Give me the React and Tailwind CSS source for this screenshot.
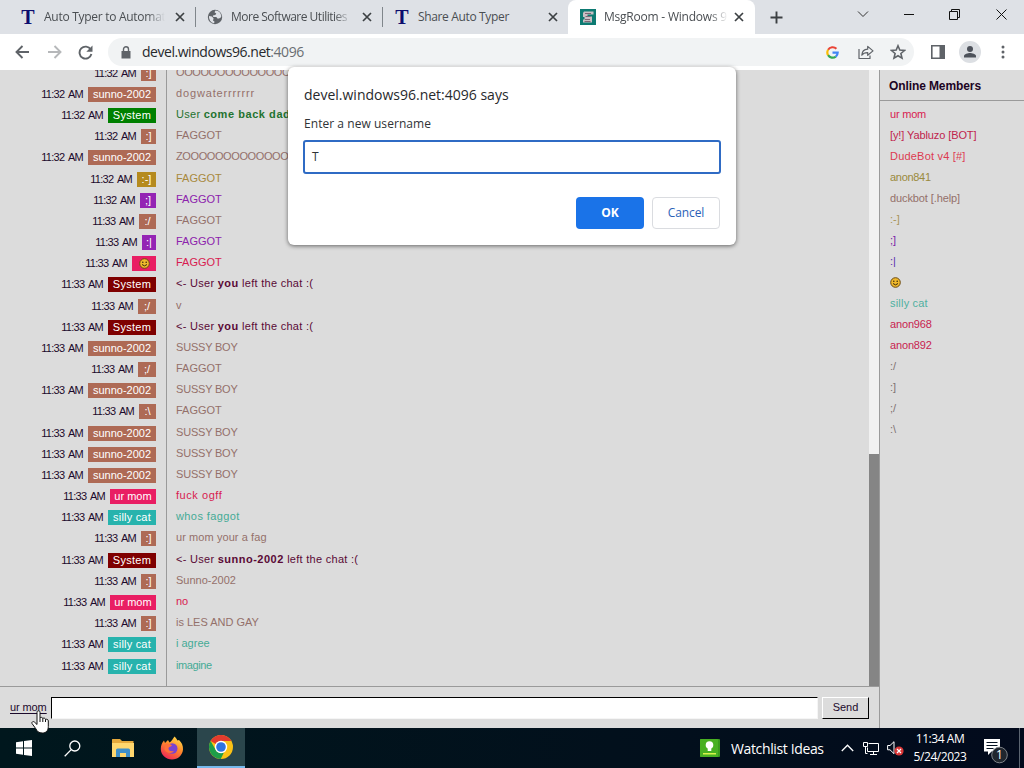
import React from 'react';
import clsx from 'clsx';

const BROWN = { badge: 'bg-[#ae6a55]', text: 'text-[#94706a]' };
const PINK = { badge: 'bg-[#e91e63]', text: 'text-[#d81b50]' };
const TEAL = { badge: 'bg-[#27b3ad]', text: 'text-[#45ab96]' };
const OLIVE = { badge: 'bg-[#b58a1e]', text: 'text-[#a8893c]' };
const PURPLE = { badge: 'bg-[#9424b4]', text: 'text-[#8c22ac]' };
const JOIN = { badge: 'bg-[#008000]', text: 'text-[#1f7330]' };
const LEAVE = { badge: 'bg-[#7f0000]', text: 'text-[#5a0a36]' };

const left = (name) => (
    <span className="tracking-[0.28px]">
        {'<- User '}
        <b className="tracking-[0.5px]">{name}</b>
        {' left the chat :('}
    </span>
);

const messages = [
    { time: '11:32 AM', user: ':]', c: BROWN, body: <span className="tracking-[-0.4px]">OOOOOOOOOOOOOO</span> },
    { time: '11:32 AM', user: 'sunno-2002', c: BROWN, body: <span className="tracking-[0.85px]">dogwaterrrrrrr</span> },
    { time: '11:32 AM', user: 'System', c: JOIN, body: <span className="tracking-[0.28px]">User <b className="tracking-[0.55px]">come back dad</b></span> },
    { time: '11:32 AM', user: ':]', c: BROWN, body: 'FAGGOT' },
    { time: '11:32 AM', user: 'sunno-2002', c: BROWN, body: <span className="tracking-[-0.4px]">ZOOOOOOOOOOOOO</span> },
    { time: '11:32 AM', user: ':-]', c: OLIVE, body: 'FAGGOT' },
    { time: '11:32 AM', user: ';]', c: PURPLE, body: 'FAGGOT' },
    { time: '11:33 AM', user: ':/', c: BROWN, body: 'FAGGOT' },
    { time: '11:33 AM', user: ':|', c: PURPLE, body: 'FAGGOT' },
    { time: '11:33 AM', user: 'smile', c: PINK, body: 'FAGGOT' },
    { time: '11:33 AM', user: 'System', c: LEAVE, body: left('you') },
    { time: '11:33 AM', user: ';/', c: BROWN, body: 'v' },
    { time: '11:33 AM', user: 'System', c: LEAVE, body: left('you') },
    { time: '11:33 AM', user: 'sunno-2002', c: BROWN, body: <span className="tracking-[-0.2px]">SUSSY BOY</span> },
    { time: '11:33 AM', user: ';/', c: BROWN, body: 'FAGGOT' },
    { time: '11:33 AM', user: 'sunno-2002', c: BROWN, body: <span className="tracking-[-0.2px]">SUSSY BOY</span> },
    { time: '11:33 AM', user: ':\\', c: BROWN, body: 'FAGGOT' },
    { time: '11:33 AM', user: 'sunno-2002', c: BROWN, body: <span className="tracking-[-0.2px]">SUSSY BOY</span> },
    { time: '11:33 AM', user: 'sunno-2002', c: BROWN, body: <span className="tracking-[-0.2px]">SUSSY BOY</span> },
    { time: '11:33 AM', user: 'sunno-2002', c: BROWN, body: <span className="tracking-[-0.2px]">SUSSY BOY</span> },
    { time: '11:33 AM', user: 'ur mom', c: PINK, body: <span className="tracking-[0.55px]">fuck ogff</span> },
    { time: '11:33 AM', user: 'silly cat', c: TEAL, body: <span className="tracking-[0.4px]">whos faggot</span> },
    { time: '11:33 AM', user: ':]', c: BROWN, body: <span className="tracking-[0.08px]">ur mom your a fag</span> },
    { time: '11:33 AM', user: 'System', c: LEAVE, body: left('sunno-2002') },
    { time: '11:33 AM', user: ':]', c: BROWN, body: 'Sunno-2002' },
    { time: '11:33 AM', user: 'ur mom', c: PINK, body: 'no' },
    { time: '11:33 AM', user: ':]', c: BROWN, body: 'is LES AND GAY' },
    { time: '11:33 AM', user: 'silly cat', c: TEAL, body: 'i agree' },
    { time: '11:33 AM', user: 'silly cat', c: TEAL, body: <span className="tracking-[-0.4px]">imagine</span> },
];

// badge widths per user name
const badgeWidth = {
    'sunno-2002': 'w-[68px]',
    System: 'w-12 tracking-[0.3px]',
    'ur mom': 'w-[46px]',
    'silly cat': 'w-12 tracking-[0.2px]',
    smile: 'w-6',
    ':]': 'w-[15px]',
    ';]': 'w-4',
    ':|': 'w-3.5',
    ':/': 'w-[17px]',
    ';/': 'w-[18px]',
    ':\\': 'w-[17px]',
    ':-]': 'w-[19px]',
};

const members = [
    ['ur mom', 'text-[#d81b50] tracking-[-0.2px]'],
    ['[y!] Yabluzo [BOT]', 'text-[#c0244c] tracking-[-0.1px]'],
    ['DudeBot v4 [#]', 'text-[#dc3a50] tracking-[0.2px]'],
    ['anon841', 'text-[#9a8a3c] tracking-[-0.3px]'],
    ['duckbot [.help]', 'text-[#94706a] tracking-[-0.1px]'],
    [':-]', 'text-[#a89458]'],
    [';]', 'text-[#7a20a8]'],
    [':|', 'text-[#5a30b0]'],
    ['smile', ''],
    ['silly cat', 'text-[#4fb0a0] tracking-[0.2px]'],
    ['anon968', 'text-[#c81e50] tracking-[-0.15px]'],
    ['anon892', 'text-[#c81e50] tracking-[-0.15px]'],
    [':/', 'text-[#7e7272]'],
    [':]', 'text-[#7e7272]'],
    [';/', 'text-[#7e7272]'],
    [':\\', 'text-[#7e7272]'],
];

const Smile = () => (
    <svg width="11" height="11" viewBox="0 0 11 11">
        <circle cx="5.5" cy="5.5" r="4.8" fill="#f0b92c" stroke="#6b4a12" strokeWidth="1" />
        <circle cx="3.8" cy="4.3" r=".8" fill="#3c2c10" />
        <circle cx="7.2" cy="4.3" r=".8" fill="#3c2c10" />
        <path d="M3 6.5q2.5 2.8 5 0" stroke="#3c2c10" fill="none" />
    </svg>
);

const Close = () => (
    <svg width="10" height="10" viewBox="0 0 10 10" className="shrink-0" stroke="#3c4043" strokeWidth="1.7">
        <path d="M1 1l8 8M9 1l-8 8" />
    </svg>
);

const TIcon = () => (
    <span className="w-4 text-center font-['Liberation_Serif',serif] font-bold text-[20px] leading-4 text-[#0c0c6e]">T</span>
);

const GlobeIcon = () => (
    <svg width="16" height="16" viewBox="0 0 16 16">
        <circle cx="8" cy="8" r="7.2" fill="#5f6368" />
        <path d="M2 7l3 .6 1.6 2L6 11.500l1.600 1.300-.6 1.500A6.500 6.500 0 0 1 2 7zM8.500 1.600l-1 1.700 1.800 1.200-1 1.500-2.500.5.5 1.500h3l1.500 1.700 2.500-.6 1-1.600A6.500 6.500 0 0 0 8.500 1.600z" fill="#dee1e6" />
    </svg>
);

const MsgIcon = () => (
    <svg width="16" height="16" viewBox="0 0 16 16">
        <path d="M0 0h16v16H0z" fill="#0d7a72" />
        <path d="M4 2.500h9.500v3H7.500v2H12v6H3v-3h1.500V8H3V4z" fill="#c9bfc4" />
        <path d="M5 4.500h6M5.500 7.500h5M5 10.500h5M4.500 12.500h6" stroke="#7d6674" />
    </svg>
);

const Tab = ({ icon, title, className, titleClass }) => (
    <div className={clsx('flex items-center h-[34px]', className)}>
        <span className="w-4 flex shrink-0">{icon}</span>
        <span className={clsx('ml-2 overflow-hidden whitespace-nowrap text-xs text-[#4a4e52] flex-1 leading-4', titleClass)}>
            {title}
        </span>
        <Close />
    </div>
);

const FADE = '[mask-image:linear-gradient(to_right,black_85%,transparent)]';

const TabStrip = () => (
    <div className="h-[34px] bg-[#dee1e6] flex items-center shrink-0">
        <Tab icon={<TIcon />} title="Auto Typer to Automat" className="w-[165px] ml-5 shrink-0" titleClass={clsx(FADE, 'mr-2.5 tracking-[-0.28px]')} />
        <div className="w-px h-5 bg-[#80868b] ml-2.5" />
        <Tab icon={<GlobeIcon />} title="More Software Utilities" className="w-[165px] ml-[11px] shrink-0" titleClass={clsx(FADE, 'mr-2.5 tracking-[-0.5px]')} />
        <div className="w-px h-5 bg-[#80868b] ml-2.5" />
        <Tab icon={<TIcon />} title="Share Auto Typer" className="w-[164px] ml-[11px] shrink-0" titleClass="mr-2.5 tracking-[-0.35px]" />
        <div className="relative bg-white rounded-t-lg w-[187px] ml-2.5 h-[34px] pl-3 pr-[11px] shrink-0">
            <Tab icon={<MsgIcon />} title="MsgRoom - Windows 9" titleClass={clsx(FADE, 'mr-1.5 tracking-[-0.22px]')} />
        </div>
        <svg width="13" height="13" viewBox="0 0 13 13" className="ml-[15px] shrink-0" stroke="#3c4043" strokeWidth="1.9">
            <path d="M6.500 .5v12M.5 6.500h12" />
        </svg>
        <svg width="12" height="12" viewBox="0 0 12 12" className="ml-[74px] mb-1.5 shrink-0" stroke="#333" fill="none">
            <path d="M1 3.500l5 5 5-5" />
        </svg>
        <svg width="11" height="11" viewBox="0 0 11 11" className="ml-[35px] mb-1.5 shrink-0" stroke="#111">
            <path d="M0 5.500h10" />
        </svg>
        <svg width="11" height="11" viewBox="0 0 11 11" className="ml-[34px] mb-1.5 shrink-0" stroke="#111" fill="none">
            <path d="M.5 2.500h8v8h-8zM2.500 2.500v-2h8v8h-2" />
        </svg>
        <svg width="11" height="11" viewBox="0 0 11 11" className="ml-[36px] mb-1.5 shrink-0" stroke="#111">
            <path d="M.5 .5l10 10M10.500 .5l-10 10" />
        </svg>
    </div>
);

const Toolbar = () => (
    <div className="h-9 bg-white flex items-center shrink-0 pl-[15px]">
        <svg width="15" height="14" viewBox="0 0 15 14" stroke="#5f6368" strokeWidth="1.9" fill="none">
            <path d="M14 7H1.500M7.500 1l-6 6 6 6" />
        </svg>
        <svg width="15" height="14" viewBox="0 0 15 14" className="ml-[17px]" stroke="#b6b8ba" strokeWidth="1.9" fill="none">
            <path d="M1 7h12.500M7.500 1l6 6-6 6" />
        </svg>
        <svg width="15" height="15" viewBox="0 0 15 15" className="ml-4" fill="none">
            <path d="M12.700 4.500A6 6 0 1 0 13.400 9" stroke="#5f6368" strokeWidth="1.900" />
            <path d="M14.500 .5v6.200H8.300z" fill="#5f6368" />
        </svg>
        <div className="ml-[15px] w-[806px] h-7 rounded-full bg-[#f1f3f4] flex items-center pl-[13px]">
            <svg width="10" height="13" viewBox="0 0 10 13">
                <path d="M.5 5h9v7.500h-9z" fill="#5f6368" />
                <path d="M2.500 5V3.300a2.500 2.500 0 0 1 5 0V5" stroke="#5f6368" strokeWidth="1.400" fill="none" />
            </svg>
            <span className="ml-[11px] text-[14px] leading-5 tracking-[-0.46px] text-[#27292c] flex-1">
                devel.windows96.net<span className="text-[#6a6e72]">:4096</span>
            </span>
            <svg width="13" height="13" viewBox="0 0 13 13" fill="none" strokeWidth="2.200">
                <path d="M10.400 2.800A5.300 5.300 0 0 0 2.100 3.800" stroke="#ea4335" />
                <path d="M2.100 3.800a5.300 5.300 0 0 0 0 5.400" stroke="#fbbc05" />
                <path d="M2.100 9.200a5.300 5.300 0 0 0 7.700 1.400" stroke="#34a853" />
                <path d="M9.800 10.600a5.300 5.300 0 0 0 1.900-4H6.500" stroke="#4285f4" />
            </svg>
            <svg width="16" height="15" viewBox="0 0 16 15" className="ml-[19px]" stroke="#5f6368" strokeWidth="1.200" fill="none" strokeLinejoin="round">
                <path d="M1 4v9.500h11V10.500" />
                <path d="M3.800 10.200C4 6.500 6.200 4.400 9.700 4.200V1.400l5.300 4.500-5.300 4.400V7.600C7 7.500 5 8.500 3.800 10.200z" />
            </svg>
            <svg width="16" height="16" viewBox="0 0 16 16" className="ml-4 mr-2" stroke="#5f6368" strokeWidth="1.600" fill="none">
                <path d="M8 1.800l1.800 4.300 4.700.4-3.600 3 1.100 4.600L8 11.700l-4 2.400 1.100-4.600-3.600-3 4.700-.4z" />
            </svg>
        </div>
        <svg width="14" height="14" viewBox="0 0 14 14" className="ml-[17px]">
            <path d="M.8 .8h12.400v12.400H.8z" stroke="#5f6368" strokeWidth="1.600" fill="none" />
            <path d="M8.500 .5h5v13h-5z" fill="#5f6368" />
        </svg>
        <svg width="22" height="22" viewBox="0 0 22 22" className="ml-3.5">
            <circle cx="11" cy="11" r="11" fill="#dcdfe3" />
            <circle cx="11" cy="8" r="3" fill="#4d525b" />
            <path d="M5 16.500v-1.500c0-2 4-3 6-3s6 1 6 3v1.500z" fill="#4d525b" />
        </svg>
        <svg width="4" height="14" viewBox="0 0 4 14" className="ml-[20px]" fill="#5f6368">
            <circle cx="2" cy="2" r="1.500" />
            <circle cx="2" cy="7" r="1.500" />
            <circle cx="2" cy="12" r="1.500" />
        </svg>
    </div>
);

const Message = ({ time, user, c, body }) => (
    <div className="flex h-[21.18px] shrink-0 items-center whitespace-nowrap leading-[15px]">
        <div className="w-[156px] flex justify-end items-center">
            <span className="text-[#1c0a2c] tracking-[-0.7px] [word-spacing:1.8px] mr-[5px]">{time}</span>
            <span className={clsx('h-[15px] text-white flex items-center justify-center', c.badge, badgeWidth[user])}>
                {user === 'smile' ? <Smile /> : user}
            </span>
        </div>
        <span className={clsx('ml-5 mb-0.5', c.text)}>{body}</span>
    </div>
);

const ChatRoom = () => (
    <div className="h-[658px] flex bg-[#dcdcdc] font-['Liberation_Sans',Arial,sans-serif] text-[11px]">
        <div className="w-[879px] flex flex-col">
            <div className="h-[616px] flex">
                <div className="w-[869px] h-full flex flex-col justify-end overflow-hidden pb-[9.4px] bg-[linear-gradient(to_right,transparent_166px,#9a9a9a_166px,#9a9a9a_167px,transparent_167px)]">
                    {messages.map((m, i) => (
                        <Message key={i} {...m} />
                    ))}
                </div>
                <div className="w-2.5 bg-[#f1f1f1] flex flex-col justify-end">
                    <div className="h-[232px] bg-[#858585]" />
                </div>
            </div>
            <div className="h-[42px] border-t border-[#9a9a9a] flex items-center pl-2.5">
                <span className="w-[41px] text-[#1c0a2c] underline underline-offset-2 whitespace-nowrap tracking-[-0.1px]">ur mom</span>
                <div className="w-[767px] h-[22px] bg-white border-t border-l border-black border-r border-b border-r-[#f5f5f5] border-b-[#f5f5f5]" />
                <button className="ml-1 w-[47px] h-[22px] bg-[#dcdcdc] border border-t-white border-l-white border-r-black border-b-black text-[#1c0a2c]">
                    Send
                </button>
            </div>
        </div>
        <div className="w-[145px] border-l border-[#9a9a9a]">
            <div className="h-[31px] border-b border-[#9a9a9a] pl-[9px] pt-0.5 flex items-center font-bold text-xs tracking-[-0.1px] text-[#1c0424]">
                Online Members
            </div>
            <div className="pt-[3px] pl-2.5">
                {members.map(([name, color]) => (
                    <div key={name} className={clsx('h-[21px] flex items-center', color)}>
                        {name === 'smile' ? <Smile /> : name}
                    </div>
                ))}
            </div>
        </div>
    </div>
);

const PromptDialog = () => (
    <div className="absolute left-[288px] top-[67px] w-[448px] h-[178px] bg-white rounded-md shadow-[0_1px_4px_rgba(0,0,0,0.55)] px-4 flex flex-col">
        <div className="mt-[18px] text-[14px] leading-5 text-[#27292c]">devel.windows96.net:4096 says</div>
        <div className="mt-[11px] text-xs leading-4 tracking-[0.05px] text-[#303336]">Enter a new username</div>
        <div className="mt-2 -ml-px w-[418px] h-[34px] border-2 border-[#2f6bc4] rounded-[3px] flex items-center pl-[7px] text-xs text-[#303336]">T</div>
        <div className="mt-[23px] flex justify-end gap-2 text-xs">
            <button className="w-[68px] h-8 rounded bg-[#1a73e8] text-white font-bold">OK</button>
            <button className="w-[68px] h-8 rounded border border-[#dadce0] text-[#2b62b8] font-medium tracking-[-0.1px]">Cancel</button>
        </div>
    </div>
);

const Taskbar = () => (
    <div className="h-10 flex items-center bg-[linear-gradient(to_right,#00171d,#02101c_60%,#020a1c)] text-white">
        <svg width="16" height="16" viewBox="0 0 16 16" className="ml-4 shrink-0" fill="#fff">
            <path d="M0 2.200L7 1.200V7.500H0zM8 1.100L16 0V7.500H8zM0 8.500H7V14.800L0 13.800zM8 8.500H16V16L8 14.900z" />
        </svg>
        <svg width="17" height="17" viewBox="0 0 17 17" className="ml-8 shrink-0" fill="none" stroke="#fff" strokeWidth="1.300">
            <circle cx="10.800" cy="6" r="5" />
            <path d="M7.200 9.600L.7 16.200" />
        </svg>
        <svg width="22" height="20" viewBox="0 0 22 20" className="ml-[31px] shrink-0">
            <path d="M0 1.500Q0 1 .5 1H8l2 2H21.500v16H0z" fill="#e5a93c" />
            <path d="M0 5h22v14H0z" fill="#ffd76e" />
            <path d="M4 19v-7q0-1.500 1.500-1.500h11q1.500 0 1.500 1.500v7h-4v-4H8v4z" fill="#3f8fc9" />
        </svg>
        <svg width="24" height="24" viewBox="0 0 24 24" className="ml-[26px] shrink-0">
            <defs>
                <linearGradient id="fox" x1=".8" y1="0" x2=".25" y2="1">
                    <stop offset="0" stopColor="#ffe04a" />
                    <stop offset=".45" stopColor="#ff8a2b" />
                    <stop offset="1" stopColor="#ee2259" />
                </linearGradient>
            </defs>
            <path d="M14.500 .5c1.500 1.200 2.200 2.500 3 4l1.500-.5c2.500 2.300 4.300 5.500 4 9.500-.5 6-5.200 10-11 10S.8 19 .8 13C.8 9.500 2 6.500 4 4.500L5 7l3-3 1.500 2.500C11.500 5.500 12.800 3 14.500 .5z" fill="url(#fox)" />
            <circle cx="12.300" cy="12.500" r="5.200" fill="#7a43d0" />
            <path d="M5 8c3-1.500 5.500 0 7 1.500-1 1.500-3 1.200-3.500 2.500-.5 2.500 2.500 4 5.500 3-1.500 3-8 2.500-9.500-1.500z" fill="#ff7139" />
        </svg>
        <div className="ml-[13px] w-12 h-10 bg-[#2b464c] border-b-2 border-[#76b9ed] flex items-center justify-center shrink-0">
            <svg width="24" height="24" viewBox="0 0 24 24">
                <circle cx="12" cy="12" r="12" fill="#fbc116" />
                <path d="M12 12L1.600 6A12 12 0 0 1 22.400 6H12z" fill="#e33b2e" />
                <path d="M1.600 6L6.800 15a6 6 0 0 0 8.200 2.200L11.800 24A12 12 0 0 1 1.600 6z" fill="#1e9e49" />
                <circle cx="12" cy="12" r="6.200" fill="#fff" />
                <circle cx="12" cy="12" r="4.800" fill="#2f73e0" />
            </svg>
        </div>
        <svg width="20" height="18" viewBox="0 0 20 18" className="ml-auto shrink-0">
            <rect width="20" height="18" rx="1" fill="#3a9a1c" />
            <rect width="18" height="18" rx="1" fill="#49b022" />
            <circle cx="9.500" cy="6" r="3.800" fill="#fff" />
            <path d="M7.700 9h3.600v3H7.700z" fill="#fff" />
            <path d="M3 14h13v1.500H3z" fill="#d9f24a" />
        </svg>
        <span className="ml-[11px] w-[94px] text-[14px] tracking-[-0.37px] whitespace-nowrap">Watchlist Ideas</span>
        <svg width="13" height="8" viewBox="0 0 13 8" className="ml-4 shrink-0" fill="none" stroke="#fff" strokeWidth="1.300">
            <path d="M.8 7l5.700-5.800L12.200 7" />
        </svg>
        <svg width="17" height="15" viewBox="0 0 17 15" className="ml-[9px] shrink-0" fill="none" stroke="#fff">
            <path d="M5.500 2.500h10v8h-11V6.500M7 13.500h7M10.500 10.500v3M.5 1.500h4v4h-4zM2.500 5.500v7h2" />
        </svg>
        <svg width="17" height="16" viewBox="0 0 17 16" className="ml-[7px] shrink-0">
            <path d="M.6 5.500h2.400l4-3.800v12L3 9.800H.6z" fill="none" stroke="#fff" />
            <circle cx="12" cy="11" r="4.600" fill="#d93636" />
            <path d="M10 9l4 4M14 9l-4 4" stroke="#fff" strokeWidth="1.200" />
        </svg>
        <div className="ml-1.5 w-[60px] flex flex-col items-center text-xs leading-[18px] tracking-[-0.45px] whitespace-nowrap">
            <span>11:34 AM</span>
            <span>5/24/2023</span>
        </div>
        <svg width="26" height="26" viewBox="0 0 26 26" className="ml-[13px] mr-[10px] mt-1.5 shrink-0">
            <path d="M1 1h16v12.500H8.500L5 17v-3.500H1z" fill="#fff" />
            <path d="M3.500 4.500h11M3.500 7.500h11M3.500 10.500h7" stroke="#061222" />
            <circle cx="16.500" cy="17" r="7.800" fill="#20262e" stroke="#7d8288" />
            <text x="16.500" y="21.300" textAnchor="middle" fontSize="12" fill="#fff" fontFamily="Open Sans">1</text>
        </svg>
        <div className="w-px h-10 bg-[#5b6470] mr-1 shrink-0" />
    </div>
);

const HandCursor = () => (
    <svg width="19" height="24" viewBox="0 0 19 24" className="absolute left-[31px] top-[710px]">
        <path
            d="M6 2.300C6 .3 9 .3 9 2.300V8c.5-1 2.700-.8 2.800.6.7-.9 2.600-.6 2.700.9.8-.6 2.800-.3 2.800 1.400v5.600c0 4-2 6.500-6 6.500-3.500 0-5-1.500-6.500-4.300L1 13.500c-.7-1.600 1.400-2.600 2.600-1.300L6 14.500z"
            fill="#fff"
            stroke="#111"
        />
        <path d="M9 8v4M11.800 8.500v3.500M14.500 9.500V12" stroke="#111" />
    </svg>
);

const App = () => {
    return (
        <div className="relative w-[1024px] h-[768px] overflow-hidden flex flex-col font-['Open_Sans','Noto_Sans',sans-serif]">
            <TabStrip />
            <Toolbar />
            <ChatRoom />
            <Taskbar />
            <PromptDialog />
            <HandCursor />
        </div>
    );
};

export default App;
